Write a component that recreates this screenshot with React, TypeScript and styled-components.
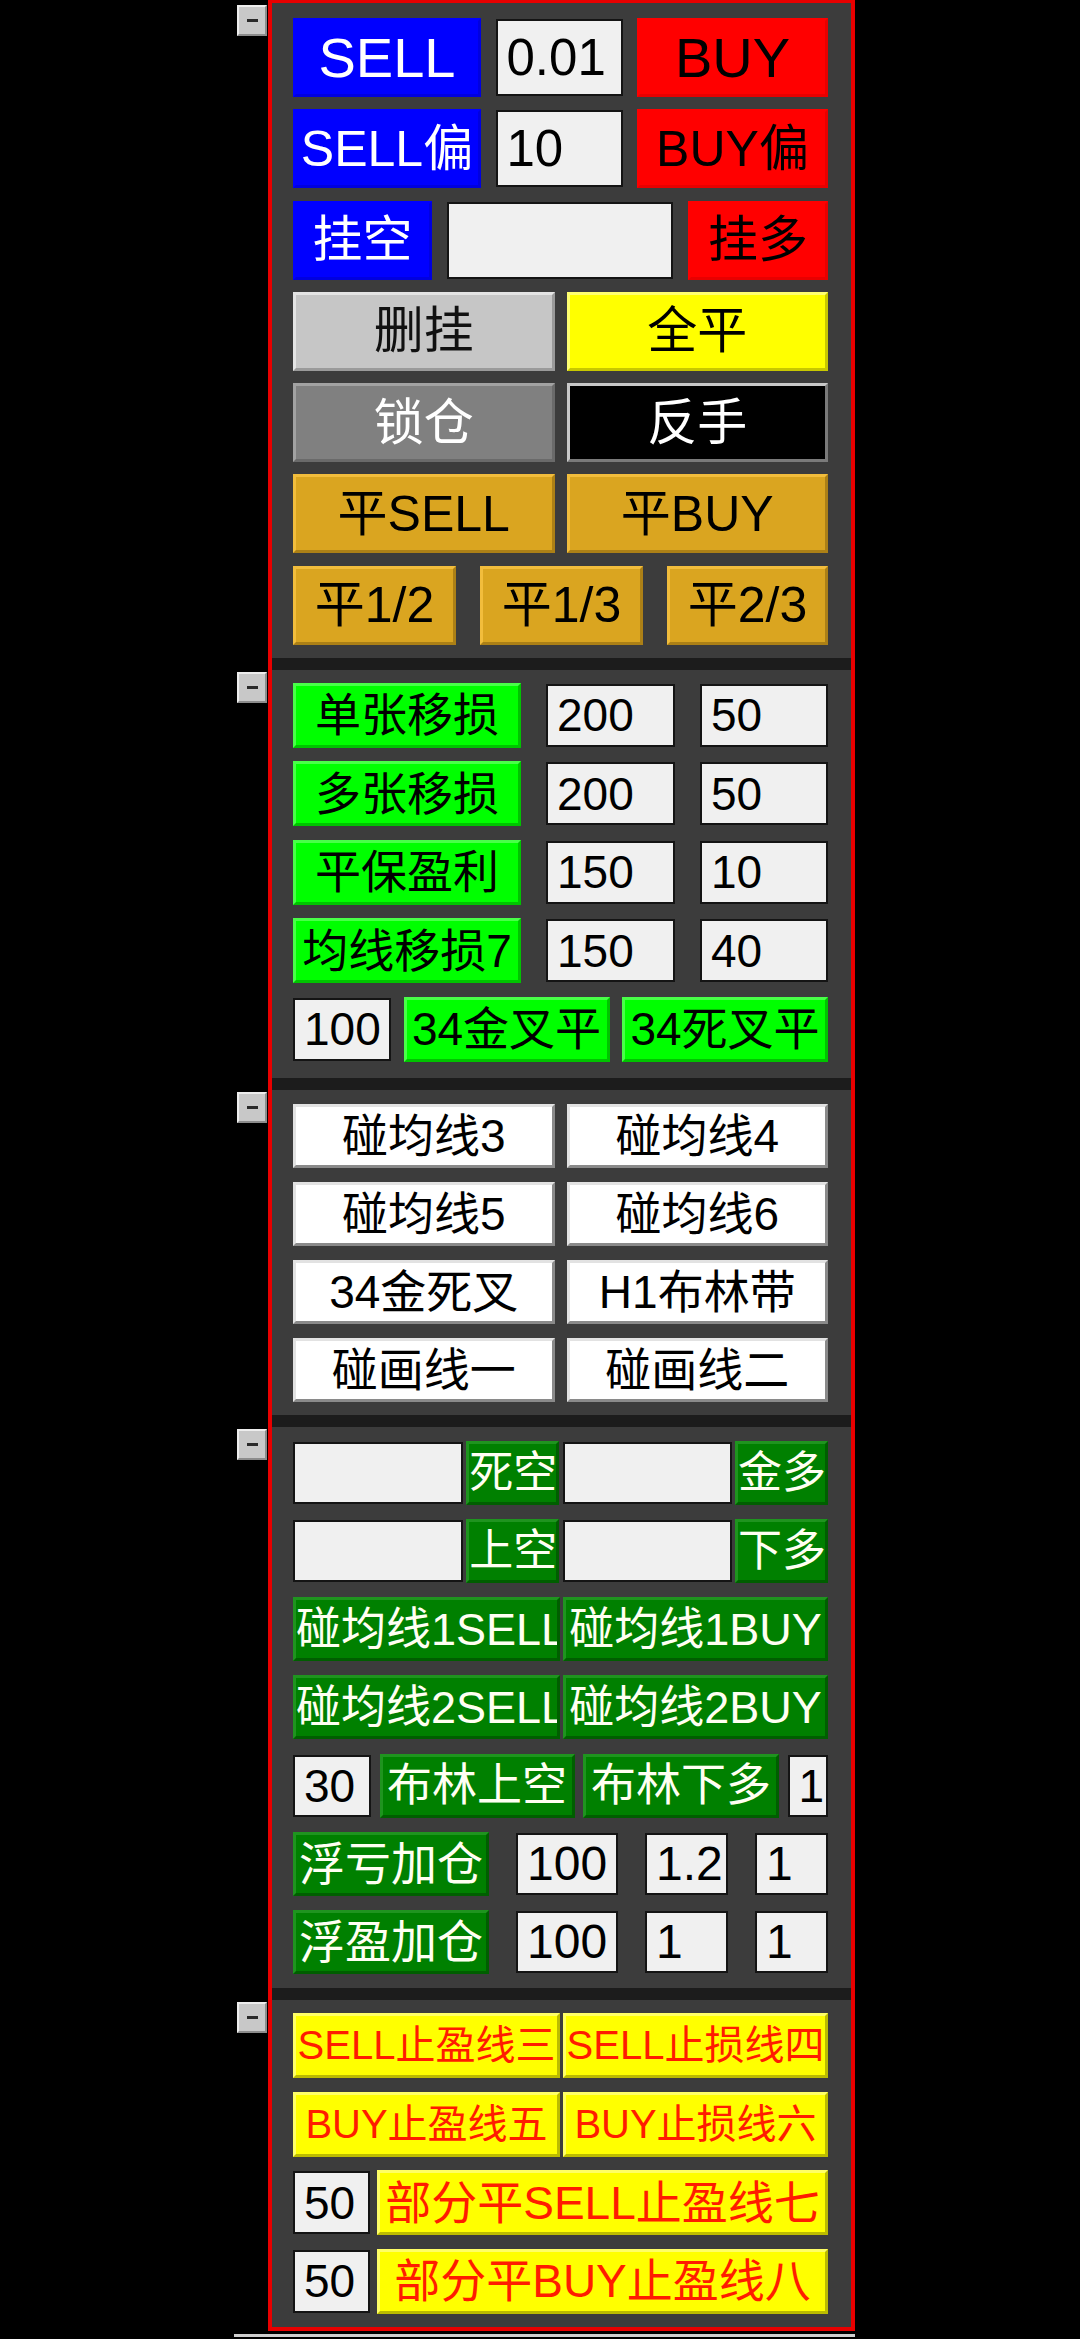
import React from "react";
import styled, { createGlobalStyle } from "styled-components";

type Tone =
  | "blue"
  | "red"
  | "silver"
  | "yellow"
  | "gray"
  | "black"
  | "gold"
  | "lime"
  | "white"
  | "green"
  | "warn";

const tones: Record<Tone, { bg: string; fg: string; light: string; dark: string }> = {
  blue: { bg: "#0000ff", fg: "#ffffff", light: "#0000ff", dark: "#0000e0" },
  red: { bg: "#ff0000", fg: "#000000", light: "#ff0000", dark: "#e80000" },
  silver: { bg: "#c6c6c6", fg: "#111111", light: "#e4e4e4", dark: "#9a9a9a" },
  yellow: { bg: "#ffff00", fg: "#000000", light: "#ffff70", dark: "#c8c800" },
  gray: { bg: "#808080", fg: "#ffffff", light: "#a2a2a2", dark: "#6a6a6a" },
  black: { bg: "#000000", fg: "#ffffff", light: "#c8c8c8", dark: "#7a7a7a" },
  gold: { bg: "#daa520", fg: "#000000", light: "#f2bd3c", dark: "#ac8016" },
  lime: { bg: "#00ff00", fg: "#000000", light: "#48ff48", dark: "#00c400" },
  white: { bg: "#ffffff", fg: "#000000", light: "#e2e2e2", dark: "#8a8a8a" },
  green: { bg: "#008000", fg: "#fffff2", light: "#1f941f", dark: "#005e00" },
  warn: { bg: "#ffff00", fg: "#ff1c00", light: "#ffff66", dark: "#bcbc00" },
};

const Global = createGlobalStyle`
  html, body {
    margin: 0;
    padding: 0;
    background: #000000;
  }
  body {
    font-family: "Liberation Sans", "Noto Sans CJK SC", sans-serif;
  }
`;

const Page = styled.div`
  width: 1080px;
  min-height: 2339px;
  box-sizing: border-box;
  padding-left: 268px;
  background: #000000;
`;

const Panel = styled.div`
  width: 587px;
  box-sizing: border-box;
  border: 4px solid #e80000;
  border-top-width: 3px;
  background: #1c1c1c;
  display: flex;
  flex-direction: column;
  gap: 12px;
`;

const Section = styled.section<{ $pt: number; $pb: number; $gap: number }>`
  position: relative;
  background: #3c3c3c;
  padding: ${(p) => p.$pt}px 23px ${(p) => p.$pb}px 21px;
  display: flex;
  flex-direction: column;
  gap: ${(p) => p.$gap}px;
`;

const Toggle = styled.div`
  position: absolute;
  left: -35px;
  top: 2px;
  width: 30px;
  height: 31px;
  box-sizing: border-box;
  background: #c8c8c8;
  border: 2px solid;
  border-color: #ededed #8c8c8c #8c8c8c #ededed;
  display: grid;
  place-items: center;
`;

const ToggleBar = styled.span`
  display: block;
  width: 11px;
  height: 3px;
  background: #2a2a2a;
`;

const Row = styled.div<{ $cols: string; $gap: number; $h: number }>`
  display: grid;
  grid-template-columns: ${(p) => p.$cols};
  column-gap: ${(p) => p.$gap}px;
  height: ${(p) => p.$h}px;
`;

const Btn = styled.div<{ $tone: Tone; $size: number }>`
  box-sizing: border-box;
  height: 100%;
  min-width: 0;
  background: ${(p) => tones[p.$tone].bg};
  color: ${(p) => tones[p.$tone].fg};
  border: 3px solid;
  border-color: ${(p) => `${tones[p.$tone].light} ${tones[p.$tone].dark} ${tones[p.$tone].dark} ${tones[p.$tone].light}`};
  display: grid;
  align-items: center;
  text-align: center;
  font-size: ${(p) => p.$size}px;
  line-height: 1;
  white-space: nowrap;
  overflow: hidden;
`;

const Field = styled.div<{ $size: number }>`
  box-sizing: border-box;
  height: calc(100% - 2px);
  margin: 1px 0;
  min-width: 0;
  background: #f0f0f0;
  border: 2px solid #141414;
  display: flex;
  align-items: center;
  padding-left: 9px;
  color: #000000;
  font-size: ${(p) => p.$size}px;
  line-height: 1;
  white-space: nowrap;
  overflow: hidden;
`;

const BottomLine = styled.div`
  margin-left: -34px;
  margin-top: 3px;
  width: 621px;
  height: 3px;
  background: #cfcfcf;
`;

const Minus = () => (
  <Toggle>
    <ToggleBar />
  </Toggle>
);

export default function App() {
  return (
    <>
      <Global />
      <Page>
        <Panel>
          <Section $pt={15} $pb={13} $gap={12.3}>
            <Minus />
            <Row $cols="188px 127px 191px" $gap={14.5} $h={79}>
              <Btn $tone="blue" $size={56}>SELL</Btn>
              <Field $size={51}>0.01</Field>
              <Btn $tone="red" $size={56}>BUY</Btn>
            </Row>
            <Row $cols="188px 127px 191px" $gap={14.5} $h={79}>
              <Btn $tone="blue" $size={50}>SELL偏</Btn>
              <Field $size={51}>10</Field>
              <Btn $tone="red" $size={50}>BUY偏</Btn>
            </Row>
            <Row $cols="139px 226px 140px" $gap={15} $h={79}>
              <Btn $tone="blue" $size={50}>挂空</Btn>
              <Field $size={51}></Field>
              <Btn $tone="red" $size={50}>挂多</Btn>
            </Row>
            <Row $cols="1fr 1fr" $gap={12} $h={79}>
              <Btn $tone="silver" $size={50}>删挂</Btn>
              <Btn $tone="yellow" $size={50}>全平</Btn>
            </Row>
            <Row $cols="1fr 1fr" $gap={12} $h={79}>
              <Btn $tone="gray" $size={50}>锁仓</Btn>
              <Btn $tone="black" $size={50}>反手</Btn>
            </Row>
            <Row $cols="1fr 1fr" $gap={12} $h={79}>
              <Btn $tone="gold" $size={50}>平SELL</Btn>
              <Btn $tone="gold" $size={50}>平BUY</Btn>
            </Row>
            <Row $cols="163px 163px 161px" $gap={24} $h={79}>
              <Btn $tone="gold" $size={50}>平1/2</Btn>
              <Btn $tone="gold" $size={50}>平1/3</Btn>
              <Btn $tone="gold" $size={50}>平2/3</Btn>
            </Row>
          </Section>

          <Section $pt={13} $pb={16} $gap={13.5}>
            <Minus />
            <Row $cols="228px 129px 128px" $gap={25} $h={65}>
              <Btn $tone="lime" $size={46}>单张移损</Btn>
              <Field $size={46}>200</Field>
              <Field $size={46}>50</Field>
            </Row>
            <Row $cols="228px 129px 128px" $gap={25} $h={65}>
              <Btn $tone="lime" $size={46}>多张移损</Btn>
              <Field $size={46}>200</Field>
              <Field $size={46}>50</Field>
            </Row>
            <Row $cols="228px 129px 128px" $gap={25} $h={65}>
              <Btn $tone="lime" $size={46}>平保盈利</Btn>
              <Field $size={46}>150</Field>
              <Field $size={46}>10</Field>
            </Row>
            <Row $cols="228px 129px 128px" $gap={25} $h={65}>
              <Btn $tone="lime" $size={46}>均线移损7</Btn>
              <Field $size={46}>150</Field>
              <Field $size={46}>40</Field>
            </Row>
            <Row $cols="98px 206px 206px" $gap={12.5} $h={65}>
              <Field $size={46}>100</Field>
              <Btn $tone="lime" $size={46}>34金叉平</Btn>
              <Btn $tone="lime" $size={46}>34死叉平</Btn>
            </Row>
          </Section>

          <Section $pt={14} $pb={13} $gap={14}>
            <Minus />
            <Row $cols="1fr 1fr" $gap={12} $h={64}>
              <Btn $tone="white" $size={46}>碰均线3</Btn>
              <Btn $tone="white" $size={46}>碰均线4</Btn>
            </Row>
            <Row $cols="1fr 1fr" $gap={12} $h={64}>
              <Btn $tone="white" $size={46}>碰均线5</Btn>
              <Btn $tone="white" $size={46}>碰均线6</Btn>
            </Row>
            <Row $cols="1fr 1fr" $gap={12} $h={64}>
              <Btn $tone="white" $size={46}>34金死叉</Btn>
              <Btn $tone="white" $size={46}>H1布林带</Btn>
            </Row>
            <Row $cols="1fr 1fr" $gap={12} $h={64}>
              <Btn $tone="white" $size={46}>碰画线一</Btn>
              <Btn $tone="white" $size={46}>碰画线二</Btn>
            </Row>
          </Section>

          <Section $pt={14} $pb={14} $gap={14.2}>
            <Minus />
            <Row $cols="170px 93px 169px 93px" $gap={3.3} $h={64}>
              <Field $size={46}></Field>
              <Btn $tone="green" $size={44}>死空</Btn>
              <Field $size={46}></Field>
              <Btn $tone="green" $size={44}>金多</Btn>
            </Row>
            <Row $cols="170px 93px 169px 93px" $gap={3.3} $h={64}>
              <Field $size={46}></Field>
              <Btn $tone="green" $size={44}>上空</Btn>
              <Field $size={46}></Field>
              <Btn $tone="green" $size={44}>下多</Btn>
            </Row>
            <Row $cols="267px 265px" $gap={3} $h={64}>
              <Btn $tone="green" $size={45}>碰均线1SELL</Btn>
              <Btn $tone="green" $size={45}>碰均线1BUY</Btn>
            </Row>
            <Row $cols="267px 265px" $gap={3} $h={64}>
              <Btn $tone="green" $size={45}>碰均线2SELL</Btn>
              <Btn $tone="green" $size={45}>碰均线2BUY</Btn>
            </Row>
            <Row $cols="78px 195px 196px 40px" $gap={8.5} $h={64}>
              <Field $size={46}>30</Field>
              <Btn $tone="green" $size={45}>布林上空</Btn>
              <Btn $tone="green" $size={45}>布林下多</Btn>
              <Field $size={46}>1</Field>
            </Row>
            <Row $cols="196px 102px 83px 73px" $gap={27} $h={64}>
              <Btn $tone="green" $size={46}>浮亏加仓</Btn>
              <Field $size={48}>100</Field>
              <Field $size={48}>1.2</Field>
              <Field $size={48}>1</Field>
            </Row>
            <Row $cols="196px 102px 83px 73px" $gap={27} $h={64}>
              <Btn $tone="green" $size={46}>浮盈加仓</Btn>
              <Field $size={48}>100</Field>
              <Field $size={48}>1</Field>
              <Field $size={48}>1</Field>
            </Row>
          </Section>

          <Section $pt={13} $pb={13} $gap={13.7}>
            <Minus />
            <Row $cols="267px 265px" $gap={3} $h={65}>
              <Btn $tone="warn" $size={40}>SELL止盈线三</Btn>
              <Btn $tone="warn" $size={40}>SELL止损线四</Btn>
            </Row>
            <Row $cols="267px 265px" $gap={3} $h={65}>
              <Btn $tone="warn" $size={40}>BUY止盈线五</Btn>
              <Btn $tone="warn" $size={40}>BUY止损线六</Btn>
            </Row>
            <Row $cols="77px 451px" $gap={7} $h={65}>
              <Field $size={46}>50</Field>
              <Btn $tone="warn" $size={46}>部分平SELL止盈线七</Btn>
            </Row>
            <Row $cols="77px 451px" $gap={7} $h={65}>
              <Field $size={46}>50</Field>
              <Btn $tone="warn" $size={46}>部分平BUY止盈线八</Btn>
            </Row>
          </Section>
        </Panel>
        <BottomLine />
      </Page>
    </>
  );
}
